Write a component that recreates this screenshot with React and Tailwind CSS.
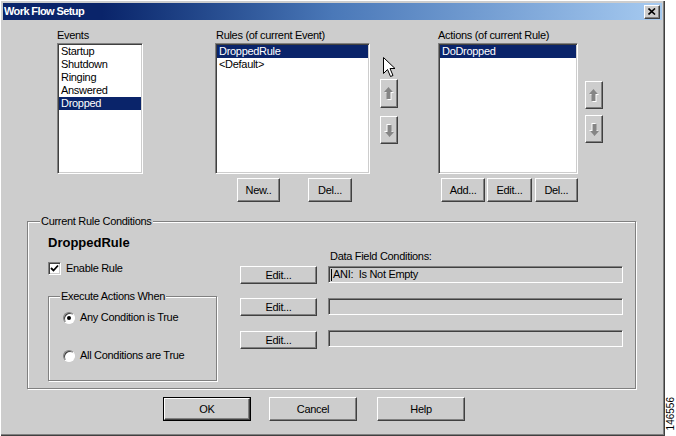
import React from "react";

const FONT = { fontFamily: '"Liberation Sans", Arial, sans-serif' };

const raised =
  "border border-t-white border-l-white border-b-[#404040] border-r-[#404040] shadow-[inset_-1px_-1px_0_#808080] bg-[#cdcdcd]";
const sunken =
  "border border-t-[#808080] border-l-[#808080] border-b-white border-r-white shadow-[inset_1px_1px_0_#404040,inset_-1px_-1px_0_#cdcdcd]";
const etched = "border border-[#808080] shadow-[inset_1px_1px_0_#fff,1px_1px_0_#fff]";

const Button = ({ className = "", children }) => (
  <div className={`${raised} flex items-center justify-center text-[11px] tracking-[-0.3px] text-black ${className}`}>
    {children}
  </div>
);

const Arrow = ({ down }) => (
  <svg width="10" height="13" viewBox="0 0 10 13" className={down ? "rotate-180" : ""}>
    <polygon points="4.5,0 9,5 6.5,5 6.5,12 2.5,12 2.5,5 0,5" fill="#fff" transform="translate(1,1)" />
    <polygon points="4.5,0 9,5 6.5,5 6.5,12 2.5,12 2.5,5 0,5" fill="#858585" />
  </svg>
);

const ArrowButton = ({ down, className = "" }) => (
  <div className={`${raised} w-[18px] h-[28px] flex items-center justify-center ${className}`}>
    <Arrow down={down} />
  </div>
);

const ListBox = ({ items, selected, className = "" }) => (
  <div className={`${sunken} bg-white p-[1px] h-[131px] ${className}`}>
    {items.map((it, i) => (
      <div
        key={it}
        className={`h-[13px] leading-[13px] px-[2px] text-[11px] tracking-[-0.3px] ${
          i === selected ? "bg-[#0a246a] text-white" : "text-black"
        }`}
      >
        {it}
      </div>
    ))}
  </div>
);

const Radio = ({ checked }) => (
  <div className="w-[12px] h-[12px] rounded-full border border-t-[#808080] border-l-[#808080] border-b-white border-r-white bg-white shadow-[inset_1px_1px_0_#404040] flex items-center justify-center">
    {checked && <div className="w-[4px] h-[4px] rounded-full bg-black" />}
  </div>
);

const Field = ({ children, className = "" }) => (
  <div className={`${sunken} h-[17px] bg-[#cdcdcd] flex items-center pl-[2px] text-[11px] tracking-[-0.3px] whitespace-pre ${className}`}>
    {children}
  </div>
);

export default function App() {
  return (
    <div className="w-[676px] h-[436px] flex bg-white overflow-hidden" style={FONT}>
      <div className="w-[665px] h-[436px] bg-[#cdcdcd] flex flex-col shadow-[inset_1px_1px_0_#fff,inset_-1px_-1px_0_#404040,inset_-2px_-2px_0_#808080]">
        {/* title bar */}
        <div className="mt-[3px] mx-[3px] h-[17px] bg-linear-to-r from-[#0a246a] from-15% via-[#4a78b8] via-50% to-[#a6caf0] flex items-center justify-between pl-[1px] pr-[2px]">
          <span className="text-white font-bold text-[11px] tracking-[-0.6px]">Work Flow Setup</span>
          <div className={`${raised} w-[16px] h-[14px] flex items-center justify-center`}>
            <svg width="8" height="7" viewBox="0 0 8 7">
              <path d="M0.5 0.5 L7 6.5 M7 0.5 L0.5 6.5" stroke="#000" strokeWidth="1.6" />
            </svg>
          </div>
        </div>

        {/* lists */}
        <div className="mt-[9px] flex items-start text-[11px] tracking-[-0.3px]">
          <div className="ml-[57px] w-[86px] flex flex-col">
            <div className="h-[13px] leading-[13px]">Events</div>
            <ListBox className="mt-[1px]" items={["Startup", "Shutdown", "Ringing", "Answered", "Dropped"]} selected={4} />
          </div>

          <div className="ml-[72px] w-[155px] flex flex-col">
            <div className="h-[13px] leading-[13px] pl-[1px]">Rules (of current Event)</div>
            <ListBox className="mt-[1px]" items={["DroppedRule", "<Default>"]} selected={0} />
            <div className="mt-[4px] flex">
              <Button className="ml-[22px] w-[43px] h-[24px]">New..</Button>
              <Button className="ml-[28px] w-[44px] h-[24px]">Del...</Button>
            </div>
          </div>

          <div className="ml-[10px] w-[18px] flex flex-col">
            <svg width="13" height="21" viewBox="0 0 13 21" className="mt-[28px] ml-[3px]">
              <polygon points="0.5,0.5 0.5,16.5 4.5,12.5 7.5,19.5 10,18.5 7,11.5 12,11.5" fill="#fff" stroke="#000" strokeWidth="1" strokeLinejoin="miter" />
            </svg>
            <ArrowButton className="mt-[1px] h-[29px]" />
            <ArrowButton down className="mt-[8px]" />
          </div>

          <div className="ml-[40px] w-[140px] flex flex-col">
            <div className="h-[13px] leading-[13px]">Actions (of current Rule)</div>
            <ListBox className="mt-[1px]" items={["DoDropped"]} selected={0} />
            <div className="mt-[4px] flex">
              <Button className="ml-[3px] w-[45px] h-[24px]">Add...</Button>
              <Button className="ml-[2px] w-[45px] h-[24px]">Edit...</Button>
              <Button className="ml-[3px] w-[44px] h-[24px]">Del...</Button>
            </div>
          </div>

          <div className="ml-[7px] w-[18px] flex flex-col">
            <ArrowButton className="mt-[52px]" />
            <ArrowButton down className="mt-[6px]" />
          </div>
        </div>

        {/* current rule conditions */}
        <div className={`relative mt-[19px] ml-[27px] w-[609px] h-[168px] ${etched} flex text-[11px] tracking-[-0.3px]`}>
          <span className="absolute -top-[7px] left-[12px] px-[1px] bg-[#cdcdcd] leading-[13px]">Current Rule Conditions</span>

          <div className="ml-[20px] w-[169px] flex flex-col pt-[13px]">
            <div className="h-[16px] leading-[16px] text-[13px] font-bold tracking-[0px]">DroppedRule</div>
            <div className="mt-[11px] flex items-center h-[13px]">
              <div className={`w-[13px] h-[13px] ${sunken} bg-white flex items-center justify-center`}>
                <svg width="9" height="9" viewBox="0 0 9 9">
                  <path d="M1 4 L3.5 6.5 L8 1.5" stroke="#000" strokeWidth="1.8" fill="none" />
                </svg>
              </div>
              <span className="ml-[5px]">Enable Rule</span>
            </div>

            <div className={`relative mt-[21px] h-[85px] ${etched} flex flex-col`}>
              <span className="absolute -top-[7px] left-[11px] px-[1px] bg-[#cdcdcd] leading-[13px]">Execute Actions When</span>
              <div className="mt-[14px] ml-[14px] flex items-center h-[13px]">
                <Radio checked />
                <span className="ml-[5px]">Any Condition is True</span>
              </div>
              <div className="mt-[25px] ml-[14px] flex items-center h-[13px]">
                <Radio />
                <span className="ml-[5px]">All Conditions are True</span>
              </div>
            </div>
          </div>

          <div className="ml-[23px] w-[77px] flex flex-col pt-[44px]">
            <Button className="h-[18px]">Edit...</Button>
            <Button className="mt-[14px] h-[18px]">Edit...</Button>
            <Button className="mt-[15px] h-[18px]">Edit...</Button>
          </div>

          <div className="ml-[11px] w-[295px] flex flex-col pt-[28px]">
            <div className="h-[13px] leading-[13px] pl-[2px]">Data Field Conditions:</div>
            <Field className="mt-[3px]">
              <span className="inline-block w-[1px] h-[12px] bg-black mr-[1px]" />
              ANI:  Is Not Empty
            </Field>
            <Field className="mt-[15px]" />
            <Field className="mt-[15px]" />
          </div>
        </div>

        {/* bottom buttons */}
        <div className="mt-[8px] flex text-[11px]">
          <div className="ml-[163px] w-[88px] h-[24px] border border-black flex">
            <Button className="flex-1">OK</Button>
          </div>
          <Button className="ml-[18px] w-[88px] h-[24px]">Cancel</Button>
          <Button className="ml-[20px] w-[88px] h-[24px]">Help</Button>
        </div>
      </div>

      <div className="w-[11px] h-[436px] flex flex-col justify-end items-center pb-[6px]">
        <span className="[writing-mode:vertical-rl] rotate-180 text-[10px] leading-[10px] text-black">146556</span>
      </div>
    </div>
  );
}
